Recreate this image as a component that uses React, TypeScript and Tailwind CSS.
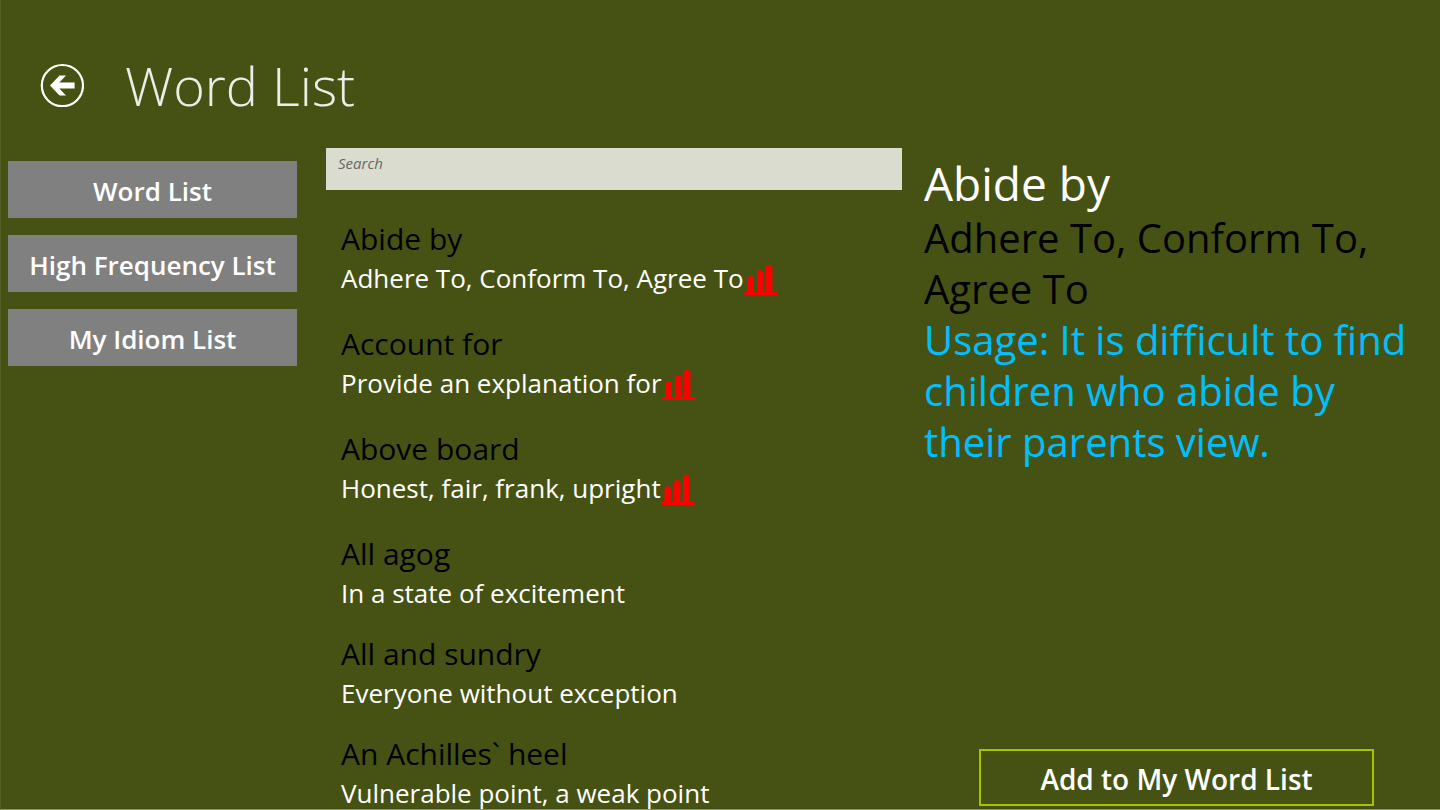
const lists = ["Word List", "High Frequency List", "My Idiom List"];

const idioms = [
  { phrase: "Abide by", meaning: "Adhere To, Conform To, Agree To", frequent: true },
  { phrase: "Account for", meaning: "Provide an explanation for", frequent: true },
  { phrase: "Above board", meaning: "Honest, fair, frank, upright", frequent: true },
  { phrase: "All agog", meaning: "In a state of excitement", frequent: false },
  { phrase: "All and sundry", meaning: "Everyone without exception", frequent: false },
  { phrase: "An Achilles` heel", meaning: "Vulnerable point, a weak point", frequent: false },
];

function BackIcon() {
  return (
    <svg viewBox="0 0 44 44" className="size-11" aria-hidden="true">
      <circle cx="22.4" cy="22.6" r="20.6" fill="none" stroke="white" strokeWidth="2.2" />
      <path d="M10 22.6 L19.5 12.6 H26 L19.4 19.6 H34.6 V25.6 H19.4 L26 32.6 H19.5 Z" fill="white" />
    </svg>
  );
}

function FrequencyIcon() {
  return (
    <svg viewBox="0 0 34 40" className="h-10 w-[34px] shrink-0" fill="#ff0000" aria-hidden="true">
      <path d="M3.5 33 V18.5 a3.2 3.2 0 0 1 6.4 0 V33 Z" />
      <path d="M13 33 V12.5 a3.2 3.2 0 0 1 6.4 0 V33 Z" />
      <path d="M22 33 V7 a3.2 3.2 0 0 1 6.4 0 V33 Z" />
      <rect x="0.5" y="31" width="33" height="3" />
    </svg>
  );
}

export default function App() {
  return (
    <div className="flex h-screen flex-col overflow-hidden border-b border-l border-b-[#8b9367] border-l-[#566128] bg-[#465213] font-['Open_Sans','Noto_Sans',sans-serif] text-white">
      <header className="flex items-center gap-[41px] pt-[46px] pl-[39px]">
        <button type="button" aria-label="Back">
          <BackIcon />
        </button>
        <h1 className="text-[54px] leading-[78px] font-light text-[#ecede6]">Word List</h1>
      </header>

      <div className="grid min-h-0 flex-1 grid-cols-[296px_minmax(0,576fr)_minmax(0,516fr)] gap-x-[22px] pt-6 pl-[7px]">
        <nav className="flex flex-col gap-[17px] pt-[13px] pr-[7px]">
          {lists.map((name) => (
            <button key={name} type="button" className="h-[57px] bg-[#808080] pt-1 text-[26px] font-semibold">
              {name}
            </button>
          ))}
        </nav>

        <main className="flex min-h-0 flex-col gap-[29px] overflow-hidden">
          <input
            type="text"
            aria-label="Search"
            placeholder="Search"
            className="h-[42px] w-full shrink-0 bg-[#dadcd0] px-3 pb-3 text-[15px] text-[#333] italic outline-none placeholder:text-[#666]"
          />
          <ul className="flex flex-col gap-[23px] pl-[15px]">
            {idioms.map((idiom) => (
              <li key={idiom.phrase}>
                <h2 className="text-[30px] leading-10 text-black">{idiom.phrase}</h2>
                <div className="flex items-start pt-0.5">
                  <p className="text-[26px] leading-[35px]">{idiom.meaning}</p>
                  {idiom.frequent && <FrequencyIcon />}
                </div>
              </li>
            ))}
          </ul>
        </main>

        <section className="flex min-h-0 flex-col pt-1.5">
          <h2 className="text-[46px] leading-[58px]">Abide by</h2>
          <p className="pr-6 text-[40px] leading-[51px] text-black">Adhere To, Conform To, Agree To</p>
          <p className="pr-6 text-[40px] leading-[51px] text-[#00bfff]">
            Usage: It is difficult to find children who abide by their parents view.
          </p>
          <button
            type="button"
            className="mt-auto mr-[66px] mb-[3px] ml-[55px] h-[57px] border-2 border-[#a4c400] pt-0.5 text-[28px] font-semibold"
          >
            Add to My Word List
          </button>
        </section>
      </div>
    </div>
  );
}
